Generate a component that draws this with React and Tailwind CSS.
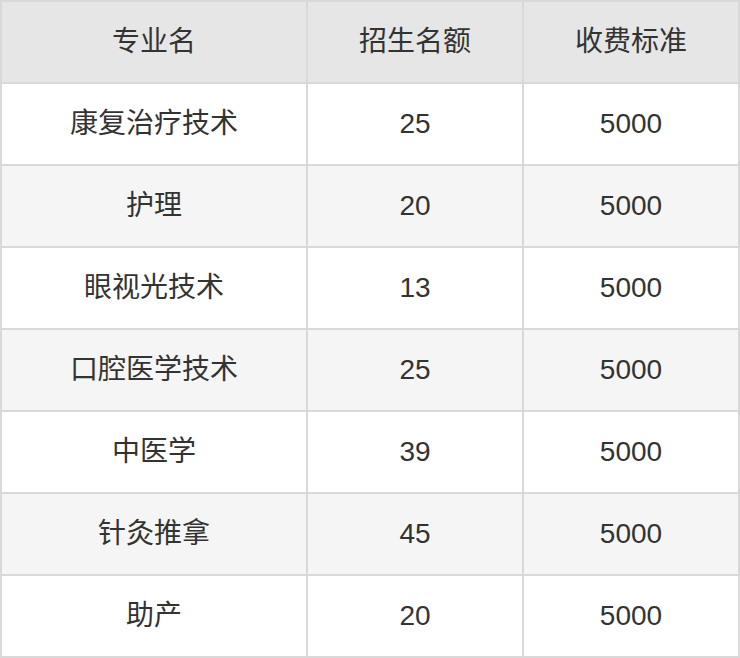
const rows = [
  ["康复治疗技术", "25", "5000"],
  ["护理", "20", "5000"],
  ["眼视光技术", "13", "5000"],
  ["口腔医学技术", "25", "5000"],
  ["中医学", "39", "5000"],
  ["针灸推拿", "45", "5000"],
  ["助产", "20", "5000"],
];

export default function App() {
  return (
    <div className="w-[740px] bg-white font-['Liberation_Sans','Noto_Sans_CJK_SC',sans-serif] text-[28px] text-[#333333]">
      <table className="w-[740px] table-fixed border-collapse border-2 border-[#d9d9d9]">
        <colgroup>
          <col className="w-[306px]" />
          <col className="w-[216px]" />
          <col className="w-[216px]" />
        </colgroup>
        <thead>
          <tr className="bg-[#e6e6e6]">
            <th className="h-[82px] border-2 border-[#d9d9d9] p-0 text-center font-normal">专业名</th>
            <th className="h-[82px] border-2 border-[#d9d9d9] p-0 text-center font-normal">招生名额</th>
            <th className="h-[82px] border-2 border-[#d9d9d9] p-0 text-center font-normal">收费标准</th>
          </tr>
        </thead>
        <tbody>
          {rows.map((r, i) => (
            <tr key={i} className={i % 2 === 1 ? "bg-[#f5f5f5]" : "bg-white"}>
              {r.map((c, j) => (
                <td key={j} className="h-[82px] border-2 border-[#d9d9d9] p-0 text-center">
                  {c}
                </td>
              ))}
            </tr>
          ))}
        </tbody>
      </table>
    </div>
  );
}
